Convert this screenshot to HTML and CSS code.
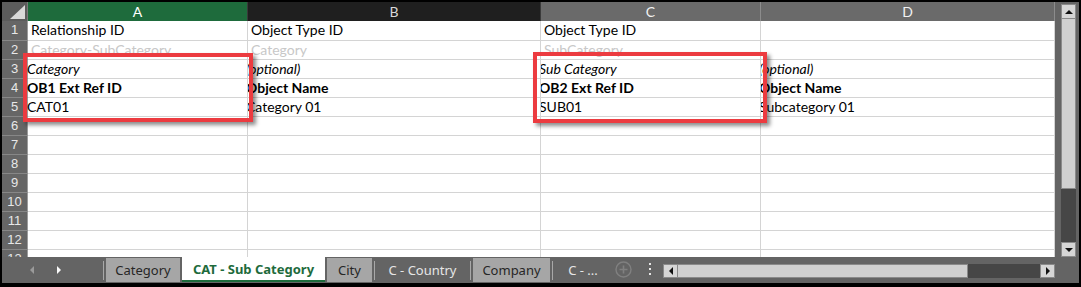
FILE: index.html
```html
<!DOCTYPE html>
<html lang="en">
<head>
	<meta charset="UTF-8">
	<title>CAT - Sub Category</title>
	<link rel="stylesheet" href="styles.css">
</head>
<body>
	<div class="window">
		<div class="main">
			<div class="sheet">
				<div class="corner"><span class="tri"></span></div>
				<div class="colhead sel">A</div>
				<div class="colhead dark">B</div>
				<div class="colhead">C</div>
				<div class="colhead">D</div>

				<div class="num">1</div>
				<div class="cell">Relationship ID</div>
				<div class="cell">Object Type ID</div>
				<div class="cell">Object Type ID</div>
				<div class="cell"></div>

				<div class="num">2</div>
				<div class="cell hint">Category-SubCategory</div>
				<div class="cell hint">Category</div>
				<div class="cell hint">SubCategory</div>
				<div class="cell"></div>

				<div class="num">3</div>
				<div class="cell first it">Category</div>
				<div class="cell shift it">(optional)</div>
				<div class="cell shift it">Sub Category</div>
				<div class="cell shift it">(optional)</div>

				<div class="num">4</div>
				<div class="cell first b">OB1 Ext Ref ID</div>
				<div class="cell shift b">Object Name</div>
				<div class="cell shift b">OB2 Ext Ref ID</div>
				<div class="cell shift b">Object Name</div>

				<div class="num">5</div>
				<div class="cell first">CAT01</div>
				<div class="cell shift">Category 01</div>
				<div class="cell shift">SUB01</div>
				<div class="cell shift">Subcategory 01</div>

				<div class="num">6</div><div class="cell"></div><div class="cell"></div><div class="cell"></div><div class="cell"></div>
				<div class="num">7</div><div class="cell"></div><div class="cell"></div><div class="cell"></div><div class="cell"></div>
				<div class="num">8</div><div class="cell"></div><div class="cell"></div><div class="cell"></div><div class="cell"></div>
				<div class="num">9</div><div class="cell"></div><div class="cell"></div><div class="cell"></div><div class="cell"></div>
				<div class="num">10</div><div class="cell"></div><div class="cell"></div><div class="cell"></div><div class="cell"></div>
				<div class="num">11</div><div class="cell"></div><div class="cell"></div><div class="cell"></div><div class="cell"></div>
				<div class="num">12</div><div class="cell"></div><div class="cell"></div><div class="cell"></div><div class="cell"></div>
				<div class="num">13</div><div class="cell"></div><div class="cell"></div><div class="cell"></div><div class="cell"></div>

				<!-- annotation boxes -->
				<div class="mark mark-a"></div>
				<div class="mark mark-c"></div>
			</div>
			<div class="vscroll">
				<div class="sbtn"><span class="arr up"></span></div>
				<div class="vthumb"></div>
				<div class="vtrack"></div>
				<div class="sbtn"><span class="arr down"></span></div>
			</div>
		</div>
		<div class="tabbar">
			<div class="nav">
				<span class="arr left dim"></span>
				<span class="arr right lite"></span>
			</div>
			<span class="sep"></span>
			<div class="tab gray w-cat">Category</div>
			<div class="tab active">CAT - Sub Category</div>
			<div class="tab gray w-city">City</div>
			<span class="sep"></span>
			<div class="tab plain w-country">C - Country</div>
			<span class="sep"></span>
			<div class="tab gray w-comp">Company</div>
			<span class="sep"></span>
			<div class="tab plain w-more">C - ...</div>
			<svg class="add" width="17" height="17" viewBox="0 0 17 17">
				<circle cx="8.5" cy="8.5" r="7.5" fill="none" stroke="#808080" stroke-width="1.4"/>
				<path d="M8.5 4.5v8M4.5 8.5h8" stroke="#808080" stroke-width="1.6"/>
			</svg>
			<svg class="dots" width="4" height="14" viewBox="0 0 4 14">
				<rect x="1" y="1" width="2" height="2" fill="#e6e6e6"/>
				<rect x="1" y="6" width="2" height="2" fill="#e6e6e6"/>
				<rect x="1" y="11" width="2" height="2" fill="#e6e6e6"/>
			</svg>
			<div class="hscroll">
				<div class="sbtn h"><span class="arr left"></span></div>
				<div class="hthumb"></div>
				<div class="htrack"></div>
				<div class="sbtn h"><span class="arr right"></span></div>
			</div>
		</div>
	</div>
</body>
</html>
```

FILE: styles.css
```css
*{margin: 0;padding: 0;box-sizing: border-box;}
body{width: 1081px;height: 287px;overflow: hidden;background: #000;}
.window{width: 1081px;height: 287px;border: 2px solid #000;border-bottom-width: 4px;background: #646464;display: flex;flex-direction: column;}
.main{height: 255px;display: flex;}
.sheet{position: relative;width: 1053px;height: 255px;overflow: hidden;display: grid;grid-template-columns: 26px 220px 293px 220px 294px;grid-template-rows: 19px 20px;grid-auto-rows: 19px;background: #fff;font-family: Lato, "Liberation Sans", sans-serif;font-size: 14px;color: #000;}
.corner{background: #5c5c5c;border-right: 1px solid #7a7a7a;position: relative;}
.corner .tri{position: absolute;right: 2px;bottom: 2px;width: 0;height: 0;border-left: 15px solid transparent;border-bottom: 14px solid #d9d9d9;}
.colhead{background: #6a6a6a;color: #f2f2f2;text-align: center;line-height: 19px;font-size: 14px;border-right: 1px solid #8c8c8c;}
.colhead.sel{background: #1e6b3c;color: #fff;border-right-color: #3a3a3a;}
.colhead.dark{background: #1f1f1f;color: #d8d8d8;border-right-color: #3a3a3a;}
.num{background: #666;color: #e8e8e8;font-family: "Liberation Sans", Arial, sans-serif;font-size: 13px;text-align: center;line-height: 18px;border-right: 1px solid #9c9c9c;border-bottom: 1px solid #878787;}
.cell{border-right: 1px solid #d4d4d4;border-bottom: 1px solid #d4d4d4;line-height: 18px;padding-left: 3px;white-space: nowrap;}
.cell.hint{color: #c8c8c8;}
.cell.first{text-indent: -4px;}
.cell.shift{text-indent: -5px;overflow: hidden;}
.cell.it{font-style: italic;}
.cell.b{font-weight: bold;}
.mark{position: absolute;border: 4px solid #ec3b40;box-shadow: 3px 3px 4px rgba(0,0,0,.45);}
.mark-a{left: 21px;top: 51px;width: 230px;height: 69px;}
.mark-c{left: 531px;top: 50px;width: 234px;height: 71px;}
.vscroll{width: 15px;margin-left: 6px;padding-top: 2px;display: flex;flex-direction: column;}
.sbtn{width: 15px;height: 15px;background: #d6d6d6;border: 1px solid #8a8a8a;display: flex;align-items: center;justify-content: center;flex: none;}
.vthumb{height: 170px;background: #d0d0d0;border: 1px solid #8a8a8a;border-top: none;}
.vtrack{flex: 1;background: #464646;}
.arr{width: 0;height: 0;display: block;}
.arr.up{border-left: 4px solid transparent;border-right: 4px solid transparent;border-bottom: 4px solid #111;}
.arr.down{border-left: 4px solid transparent;border-right: 4px solid transparent;border-top: 4px solid #111;}
.arr.left{border-top: 4px solid transparent;border-bottom: 4px solid transparent;border-right: 4px solid #111;}
.arr.right{border-top: 4px solid transparent;border-bottom: 4px solid transparent;border-left: 4px solid #111;}
.arr.dim{border-right-color: #9a9a9a;}
.arr.lite{border-left-color: #fafafa;}
.tabbar{height: 26px;display: flex;align-items: flex-end;padding-bottom: 1px;font-family: "Noto Sans", "Open Sans", sans-serif;font-size: 13px;}
.nav{width: 100px;height: 25px;display: flex;align-items: center;padding-left: 28px;gap: 23px;}
.sep{width: 1px;height: 19px;background: #a8a8a8;margin: 0 1px 2px;}
.tab{height: 24px;line-height: 24px;text-align: center;white-space: nowrap;}
.tab.gray{background: #a6a6a6;color: #262626;margin: 0 1px;}
.tab.plain{color: #e6e6e6;}
.tab.active{width: 143px;height: 25px;line-height: 24px;background: #fff;color: #1e6b3c;font-weight: bold;border-bottom: 2px solid #1e6b3c;margin: 0 1px;}
.w-cat{width: 74px;}
.w-city{width: 45px;}
.w-country{width: 93px;}
.w-comp{width: 77px;}
.w-more{width: 58px;}
.add{margin: 0 0 4px 3px;}
.dots{margin: 0 0 6px 16px;}
.hscroll{width: 392px;height: 14px;margin: 0 0 4px 11px;display: flex;}
.sbtn.h{width: 15px;height: 14px;}
.hthumb{width: 290px;background: #d0d0d0;border: 1px solid #8a8a8a;border-left: none;}
.htrack{flex: 1;background: #464646;}
```
